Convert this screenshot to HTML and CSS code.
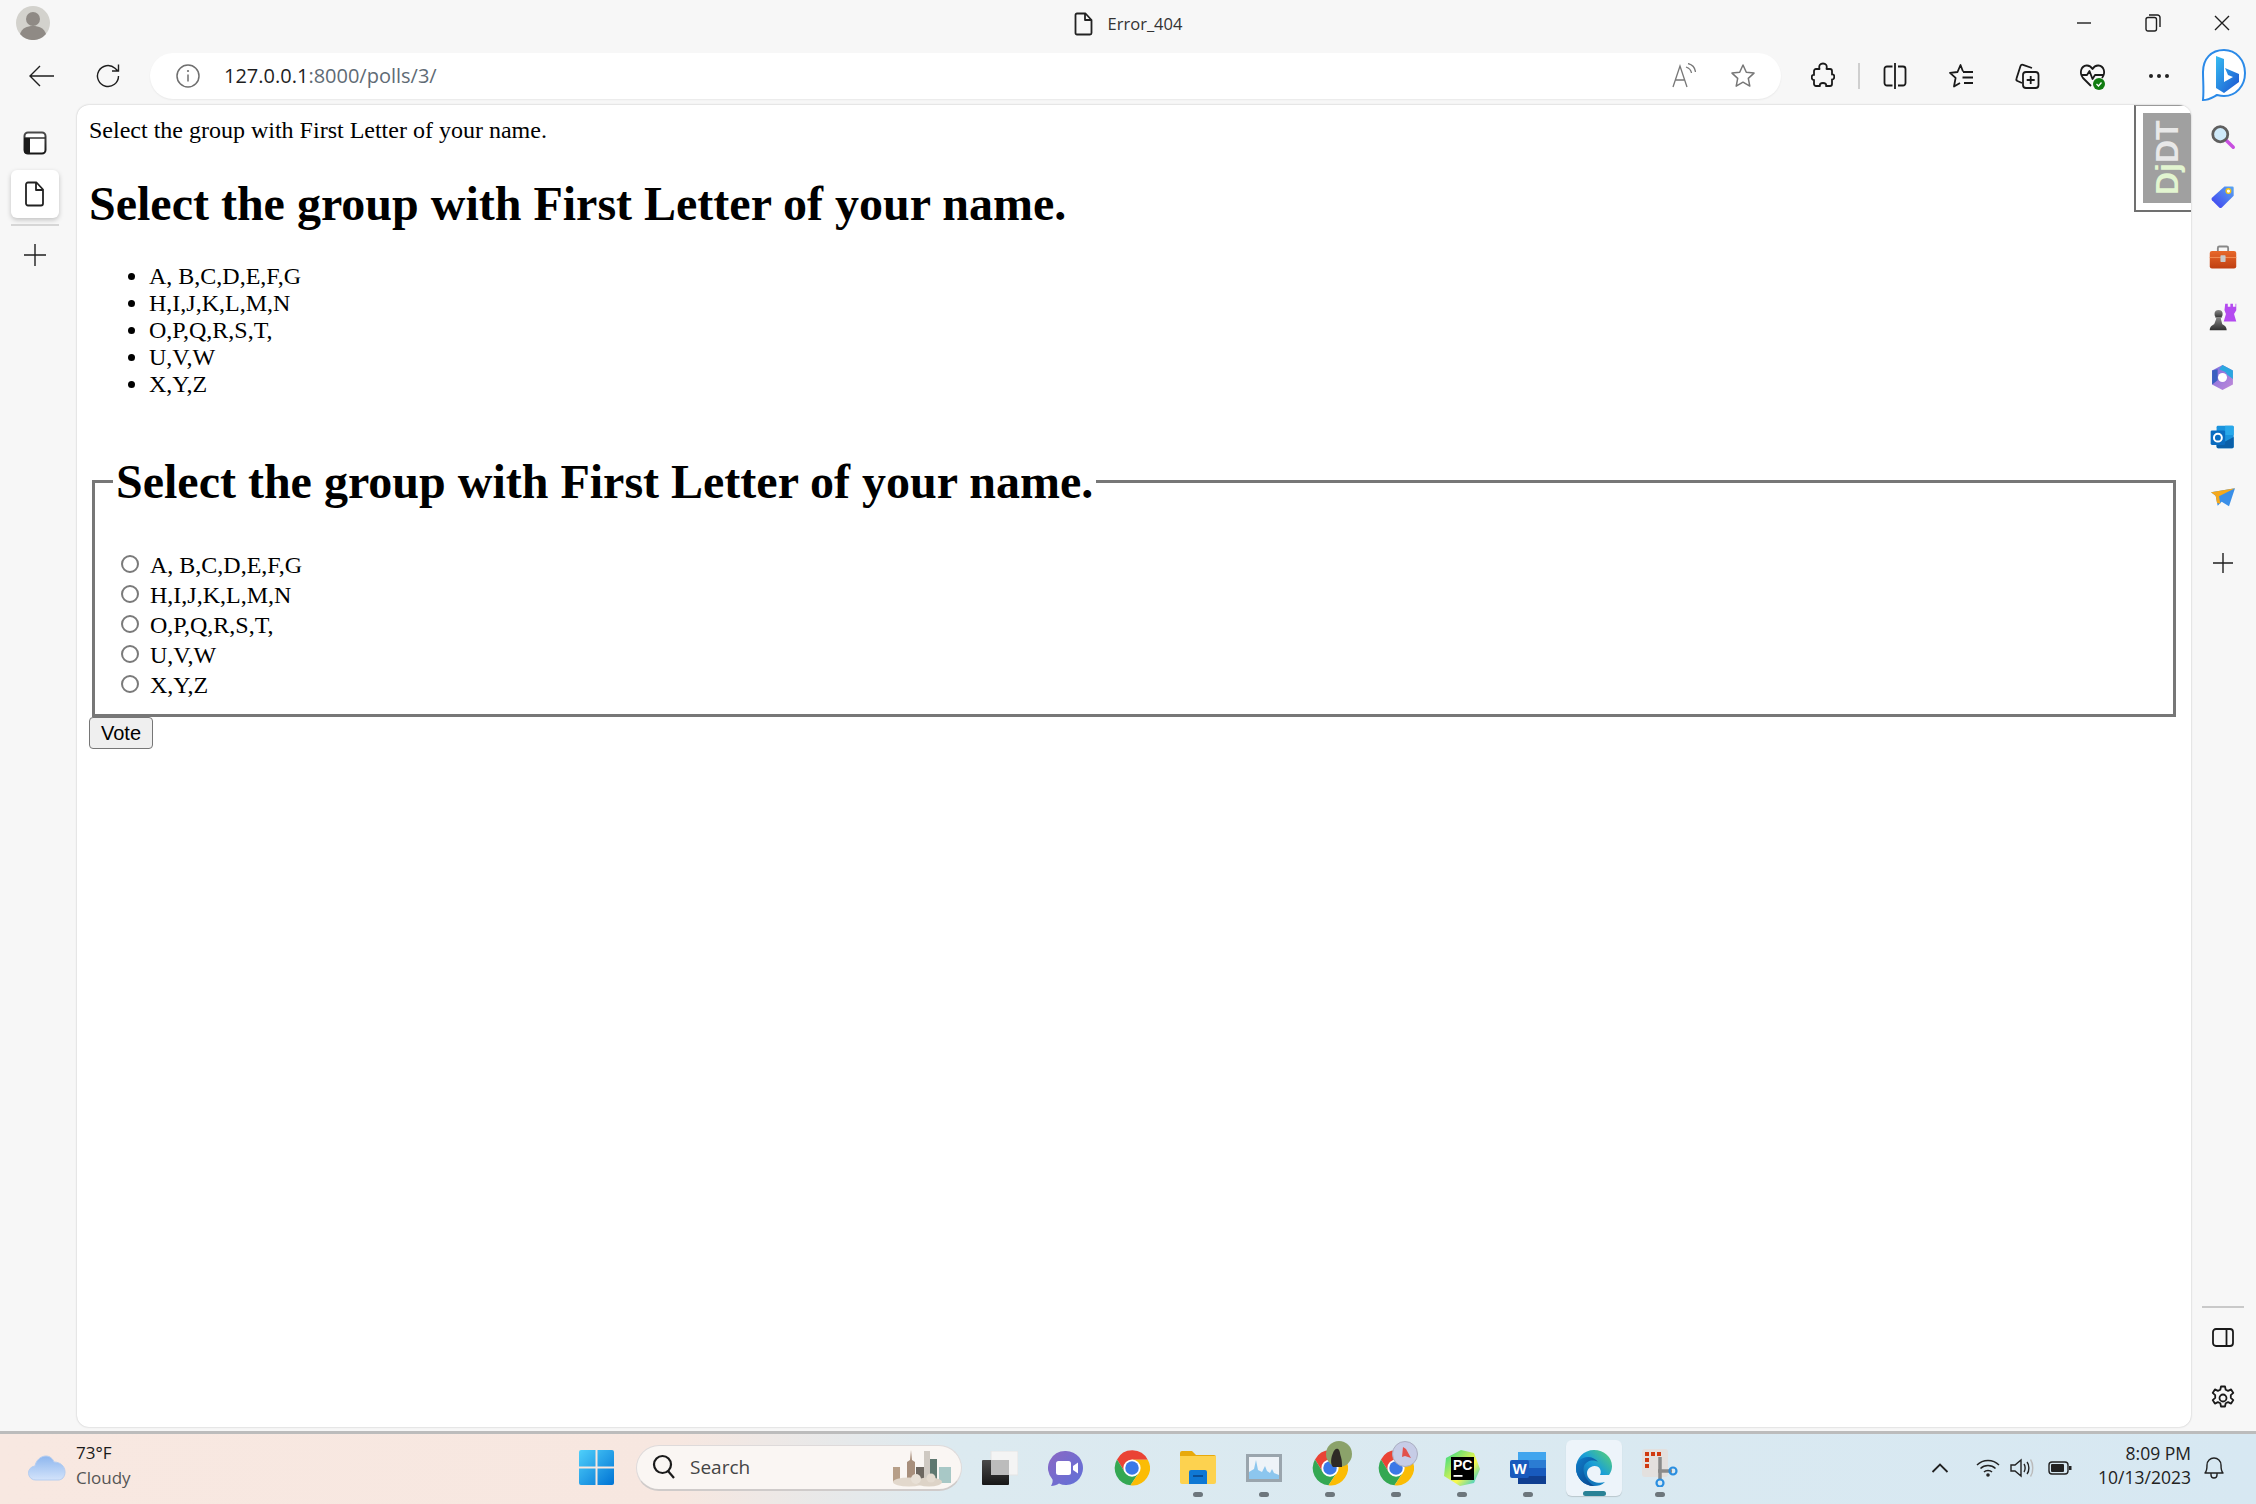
FILE: index.html
```html
<!DOCTYPE html>
<html lang="en">
<head>
<meta charset="utf-8">
<title>Error_404</title>
<link rel="stylesheet" href="styles.css">
</head>
<body>
<svg class="defs" width="0" height="0" aria-hidden="true">
  <defs>
    <linearGradient id="gWin" x1="0" y1="0" x2="1" y2="1"><stop offset="0" stop-color="#4fd0fb"/><stop offset="1" stop-color="#0073d4"/></linearGradient>
    <linearGradient id="gTeams" x1="0" y1="0" x2="1" y2="1"><stop offset="0" stop-color="#8b68c4"/><stop offset="1" stop-color="#5f70d8"/></linearGradient>
    <linearGradient id="gBing" x1="0" y1="0" x2="1" y2="1"><stop offset="0" stop-color="#37bdf2"/><stop offset="1" stop-color="#1a52d0"/></linearGradient>
    <linearGradient id="gEdge" x1="0" y1="1" x2="1" y2="0"><stop offset="0" stop-color="#0c4f9e"/><stop offset=".55" stop-color="#1a9fd8"/><stop offset="1" stop-color="#5fd66a"/></linearGradient>
    <linearGradient id="gEdge2" x1="0" y1="0" x2="1" y2="1"><stop offset="0" stop-color="#0f7fcb"/><stop offset="1" stop-color="#0a3f87"/></linearGradient>
    <linearGradient id="gCloud" x1="0" y1="0" x2="0" y2="1"><stop offset="0" stop-color="#8db6ee"/><stop offset="1" stop-color="#d3e3fa"/></linearGradient>
    <linearGradient id="gTag" x1="1" y1="0" x2="0" y2="1"><stop offset="0" stop-color="#5aa7f0"/><stop offset="1" stop-color="#3f3df0"/></linearGradient>
    <linearGradient id="gCase" x1="0" y1="0" x2="0" y2="1"><stop offset="0" stop-color="#e8682a"/><stop offset="1" stop-color="#bf3f12"/></linearGradient>
    <linearGradient id="gPawn" x1="0" y1="0" x2="0" y2="1"><stop offset="0" stop-color="#8a8a8a"/><stop offset="1" stop-color="#2f2f2f"/></linearGradient>
    <linearGradient id="gView" x1="0" y1="0" x2="0" y2="1"><stop offset="0" stop-color="#4a4a4a"/><stop offset="1" stop-color="#171717"/></linearGradient>
    <linearGradient id="gM365" x1="0" y1="0" x2="1" y2="1"><stop offset="0" stop-color="#7b6ee0"/><stop offset="1" stop-color="#c28ad8"/></linearGradient>
    <linearGradient id="gPc" x1="0" y1="0" x2="1" y2="1"><stop offset="0" stop-color="#21d789"/><stop offset=".6" stop-color="#fcf84a"/><stop offset="1" stop-color="#07c3f2"/></linearGradient>
    <symbol id="chrome" viewBox="0 0 48 48">
      <path fill="#ea4335" d="M24 13H45A23 23 0 0 0 4 12.500L14.500 29.500Z"/>
      <path fill="#34a853" d="M14.500 29.500 4 12.500A23 23 0 0 0 22 47L33.500 29.500Z"/>
      <path fill="#fbbc05" d="M24 13H45A23 23 0 0 1 22 47L33.500 29.500Z"/>
      <circle cx="24" cy="24" r="11.500" fill="#fff"/>
      <circle cx="24" cy="24" r="9" fill="#3b78e7"/>
    </symbol>
  </defs>
</svg>

<div class="window">
  <header class="titlebar">
    <div class="profile">
      <svg width="34" height="34" viewBox="0 0 34 34"><circle cx="17" cy="17" r="17" fill="#d3d2cd"/><circle cx="17" cy="13" r="7" fill="#8f8a85"/><path fill="#8f8a85" d="M4 28c2-6 7-8 13-8s11 2 13 8a17 17 0 0 1-26 0z"/></svg>
    </div>
    <div class="doc-title">
      <svg class="line" width="20" height="24" viewBox="0 0 20 24"><path d="M3 1.500h8.500l6 6.500v13a1.500 1.500 0 0 1-1.500 1.500H3A1.500 1.500 0 0 1 1.500 21V3A1.500 1.500 0 0 1 3 1.500zM11 1.500V8h6.500"/></svg>
      <span>Error_404</span>
    </div>
    <div class="win-controls">
      <span class="win-btn"><svg class="thin" width="16" height="16" viewBox="0 0 16 16"><path d="M1 8h14"/></svg></span>
      <span class="win-btn"><svg class="thin" width="16" height="18" viewBox="0 0 16 18"><rect x="1" y="3.500" width="10.500" height="13.500" rx="2"/><path d="M4 1h8.500A2.500 2.500 0 0 1 15 3.500V13"/></svg></span>
      <span class="win-btn"><svg class="thin" width="16" height="16" viewBox="0 0 16 16"><path d="M1 1l14 14M15 1L1 15"/></svg></span>
    </div>
  </header>

  <nav class="toolbar">
    <span class="slot"><svg class="thin" width="28" height="24" viewBox="0 0 28 24"><path d="M26 12H2M12 2 2 12l10 10"/></svg></span>
    <span class="slot"><svg class="thin" width="28" height="28" viewBox="0 0 28 28"><path d="M24.500 14A10.500 10.500 0 1 1 21 6.200L24 9M24.500 2.500V9h-6.500"/></svg></span>
    <div class="address">
      <span class="addr-icon"><svg width="24" height="24" viewBox="0 0 24 24"><circle cx="12" cy="12" r="11" fill="none" stroke="#6f6f6f" stroke-width="1.500"/><path d="M12 10.500v7" stroke="#6f6f6f" stroke-width="1.500"/><circle cx="12" cy="7" r="1.100" fill="#6f6f6f"/></svg></span>
      <span class="url"><span class="host">127.0.0.1</span>:8000/polls/3/</span>
      <span class="addr-icon"><svg width="24" height="26" viewBox="0 0 24 26"><path d="M1 24 8 3l7 21M3.500 17h9M14 4c3 1 5 3 5.500 6M16 .5c4 1 7 4 7.500 8.500" fill="none" stroke="#777" stroke-width="1.300"/></svg></span>
      <span class="addr-gap"></span>
      <span class="addr-icon"><svg width="26" height="26" viewBox="0 0 26 26"><path d="M13 2l3.300 7.200 7.700.9-5.700 5.300 1.500 7.700L13 19.200 6.200 23.100l1.500-7.700L2 10.100l7.700-.9z" fill="none" stroke="#777" stroke-width="1.500" stroke-linejoin="round"/></svg></span>
    </div>
    <span class="slot"><svg class="thick" width="24" height="28" viewBox="0 0 24 28"><path d="M8.500 7c-1-4 1-5.500 3.500-5.500S16.500 3 15.500 7H19a2 2 0 0 1 2 2v3.500c3-1 3 5.500 0 5V22a2 2 0 0 1-2 2h-4c.7-2-.8-3-3-3s-3.700 1-3 3H5a2 2 0 0 1-2-2v-4c-3 .5-3-6 0-5V9a2 2 0 0 1 2-2z"/></svg></span>
    <span class="tool-divider"></span>
    <span class="slot"><svg class="thick" width="24" height="28" viewBox="0 0 24 28"><path d="M12 1v26M9.500 4.500H4A2.500 2.500 0 0 0 1.500 7v14A2.500 2.500 0 0 0 4 23.500h5.500M15 4.500h5A2.500 2.500 0 0 1 22.500 7v14a2.500 2.500 0 0 1-2.500 2.500h-5"/></svg></span>
    <span class="slot"><svg class="thick" width="26" height="26" viewBox="0 0 26 26"><path d="M15 8.500 12.500 2 9.500 9 2 9.800l5.600 5-1.600 8.700 6-3.500M15 9h10M14.500 14.500H25M16 20h9"/></svg></span>
    <span class="slot"><svg class="thick" width="26" height="28" viewBox="0 0 26 28"><path d="M8 21 3.500 19a2 2 0 0 1-1-2.500L6.500 4a2 2 0 0 1 2.500-1.200L18 6"/><rect x="9" y="10" width="15.500" height="16" rx="3"/><path d="M16.700 14v8M12.700 18h8"/></svg></span>
    <span class="slot"><svg width="28" height="28" viewBox="0 0 28 28"><path class="stroke-dark" d="M12 24 4 16C0 11 2 4 7.500 3.500c2.500-.2 4.500 1 6 3.500 1.500-2.500 3.500-3.700 6-3.500C25 4 27 11 23 16M2 13h6l2.500-4 3 8 2.500-4h8"/><circle cx="20" cy="22" r="6" fill="#107c10"/><path d="M17.500 22l2 2 3-3.500" fill="none" stroke="#fff" stroke-width="1.300"/></svg></span>
    <span class="slot"><svg width="22" height="6" viewBox="0 0 22 6"><circle cx="3" cy="3" r="2" fill="#222"/><circle cx="11" cy="3" r="2" fill="#222"/><circle cx="19" cy="3" r="2" fill="#222"/></svg></span>
    <span class="bing-slot"><svg width="46" height="56" viewBox="0 0 46 56"><path d="M23 2C10 2 2 11 2 24c0 9 1 18 0 28 6 0 10-3 14-5 3 .7 5 1 7 1 12 0 21-10 21-23S35 2 23 2z" fill="#fff" stroke="#2b8ae8" stroke-width="2"/><path fill="url(#gBing)" d="M15 8l8 3v23l9-5-5-2-3-7 14 6v8L23 45l-8-5z"/></svg></span>
  </nav>

  <div class="main">
    <aside class="left-rail">
      <span class="rail-item view-toggle"><svg width="24" height="24" viewBox="0 0 24 24"><rect x="1.500" y="1.500" width="21" height="21" rx="3.500" fill="#fff" stroke="url(#gView)" stroke-width="2"/><path d="M1 7h22" stroke="#333" stroke-width="1.500"/><path fill="#1a1a1a" d="M1 7h6v16H4a3 3 0 0 1-3-3z"/></svg></span>
      <span class="rail-item tab-active"><svg class="line" width="20" height="26" viewBox="0 0 20 26"><path d="M3 1.500h8.500l6.500 7v14a2 2 0 0 1-2 2H3a2 2 0 0 1-2-2V3.500A2 2 0 0 1 3 1.500zM11 1.500V9h7"/></svg></span>
      <span class="rail-divider"></span>
      <span class="rail-item rail-plus"><svg class="thin" width="22" height="22" viewBox="0 0 22 22"><path d="M11 0v22M0 11h22"/></svg></span>
    </aside>

    <main class="page">
      <p class="intro">Select the group with First Letter of your name.</p>
      <h1 class="heading">Select the group with First Letter of your name.</h1>
      <ul class="groups">
        <li>A, B,C,D,E,F,G</li>
        <li>H,I,J,K,L,M,N</li>
        <li>O,P,Q,R,S,T,</li>
        <li>U,V,W</li>
        <li>X,Y,Z</li>
      </ul>
      <form class="vote-form">
        <fieldset class="field">
          <legend class="legend"><h1 class="heading heading-legend">Select the group with First Letter of your name.</h1></legend>
          <label class="choice"><span class="radio"></span>A, B,C,D,E,F,G</label>
          <label class="choice"><span class="radio"></span>H,I,J,K,L,M,N</label>
          <label class="choice"><span class="radio"></span>O,P,Q,R,S,T,</label>
          <label class="choice"><span class="radio"></span>U,V,W</label>
          <label class="choice"><span class="radio"></span>X,Y,Z</label>
        </fieldset>
        <button type="button" class="vote">Vote</button>
      </form>
      <div class="djdt"><span class="djdt-text"><span class="dj">Dj</span>DT</span></div>
    </main>

    <aside class="right-rail">
      <span class="side-slot"><svg width="26" height="26" viewBox="0 0 38 38"><path d="M24 24l10 10" stroke="#c84fe0" stroke-width="5" stroke-linecap="round"/><circle cx="15" cy="15" r="11" fill="#cfeafa" stroke="#5f5f5f" stroke-width="4"/></svg></span>
      <span class="side-slot"><svg width="25" height="24" viewBox="0 0 38 36"><path fill="url(#gTag)" d="M22 2h12a2 2 0 0 1 2 2v12L18 34a3 3 0 0 1-4 0L3 23a3 3 0 0 1 0-4z"/><circle cx="28" cy="9" r="3.500" fill="#fff" stroke="#f5c518" stroke-width="2"/></svg></span>
      <span class="side-slot"><svg width="28" height="25" viewBox="0 0 38 34"><path d="M12 9V4a2 2 0 0 1 2-2h10a2 2 0 0 1 2 2v5" fill="none" stroke="#888" stroke-width="2.500"/><rect x="1" y="8" width="36" height="24" rx="3" fill="url(#gCase)"/><path d="M1 17h36" stroke="#f08a50" stroke-width="1.500"/><rect x="15.500" y="14" width="7" height="9" rx="1" fill="#c8c8c8"/></svg></span>
      <span class="side-slot"><svg width="28" height="28" viewBox="0 0 38 38"><path fill="#b44af0" d="M22 1h3.500v4H29V1h3.500v4H36V1h1v9l-3 5 3 10H20l3-10-2-5z"/><circle cx="13" cy="15" r="5.500" fill="url(#gPawn)"/><path fill="url(#gPawn)" d="M8 19h10l-2 2 2 8c2 1 6 3 6 8H1c0-5 4-7 6-8l3-8z"/></svg></span>
      <span class="side-slot"><svg width="25" height="27" viewBox="0 0 36 38"><path fill="url(#gM365)" d="M18 1 33 9v20L18 37 3 29V9z"/><path fill="#2ba7e0" d="M18 1l15 8v12l-8-6-3-4-9-4z"/><path fill="#3a5fc0" d="M3 9l8-2v16l-8 6z"/><circle cx="18" cy="19" r="6.500" fill="#fff"/></svg></span>
      <span class="side-slot"><svg width="25" height="24" viewBox="0 0 38 36"><rect x="10" y="1" width="26" height="34" rx="2" fill="#1a93dd"/><path fill="#28a8ea" d="M23 1h11a2 2 0 0 1 2 2v12H23z"/><path fill="#0a5fa8" d="M10 18l13 7 13-7v15a2 2 0 0 1-2 2H12a2 2 0 0 1-2-2z"/><rect x="1" y="8" width="22" height="22" rx="2" fill="#0a6cc0"/><circle cx="12" cy="19" r="6" fill="none" stroke="#fff" stroke-width="3"/></svg></span>
      <span class="side-slot"><svg width="26" height="20" viewBox="0 0 38 30"><path fill="#3a8fe8" d="M1 8 37 2 28 29 17 22 11 28 8 13z"/><path fill="#f5a81c" d="M1 8 37 2 13 14l2 11-5-1-2-11z"/></svg></span>
      <span class="side-slot side-plus"><svg class="thin" width="20" height="20" viewBox="0 0 20 20"><path d="M10 0v20M0 10h20"/></svg></span>
      <span class="side-divider"></span>
      <span class="side-slot"><svg class="thick" width="22" height="20" viewBox="0 0 22 20"><rect x="1" y="1" width="20" height="17" rx="3"/><path d="M14.500 1v17"/></svg></span>
      <span class="side-slot side-last"><svg class="thick" width="26" height="26" viewBox="0 0 26 26"><circle cx="13" cy="13" r="3.500"/><path d="M11 1.500h4l.7 3.300 2.400 1.100 3-1.500 2.200 3.500-2.500 2.200v2.800l2.500 2.200-2.200 3.500-3-1.500-2.400 1.100-.7 3.300h-4l-.7-3.300-2.400-1.100-3 1.500-2.200-3.500 2.500-2.200v-2.800L2.700 7.900l2.200-3.500 3 1.500 2.400-1.100z"/></svg></span>
    </aside>
  </div>

  <footer class="taskbar">
    <div class="weather">
      <svg width="38" height="26" viewBox="0 0 38 26"><path fill="url(#gCloud)" stroke="#b5cdf0" d="M8 25a7 7 0 0 1-1-14c1-6 6-10 11-10 4 0 7 3 8 6 6 0 11 4 11 10 0 5-3 8-7 8z"/></svg>
      <div class="weather-text"><span>73°F</span><span class="weather-sub">Cloudy</span></div>
    </div>
    <span class="start"><svg width="35" height="35" viewBox="0 0 35 35"><path fill="url(#gWin)" d="M0 2a2 2 0 0 1 2-2h14.500v16.500H0zM18.500 0H33a2 2 0 0 1 2 2v14.500H18.500zM0 18.500h16.500V35H2a2 2 0 0 1-2-2zM18.500 18.500H35V33a2 2 0 0 1-2 2H18.500z"/></svg></span>
    <div class="search">
      <svg width="24" height="26" viewBox="0 0 24 26"><circle cx="10.500" cy="10.500" r="8.500" fill="none" stroke="#1a1a1a" stroke-width="2.200"/><path d="M16 17l6 7" stroke="#1a1a1a" stroke-width="2.200"/></svg>
      <span class="search-label">Search</span>
      <svg class="skyline" width="66" height="40" viewBox="0 0 66 40"><path fill="#a88f7c" d="M18 34V15l3-2 1-10 1 10 3 2v19z"/><rect x="4" y="20" width="7" height="15" fill="#b79f88"/><rect x="27" y="20" width="8" height="14" fill="#6d6760"/><rect x="35" y="4" width="6" height="30" fill="#cfc9c2"/><rect x="41" y="12" width="7" height="22" fill="#5f7870"/><rect x="50" y="20" width="12" height="16" fill="#a8c8c6"/><ellipse cx="20" cy="35" rx="16" ry="4.500" fill="#e2d8cc"/><ellipse cx="40" cy="35" rx="13" ry="4.500" fill="#ddd3c7"/><circle cx="27" cy="32" r="5" fill="#e8e0d6"/><circle cx="42" cy="31" r="4.500" fill="#e4dbd0"/></svg>
    </div>
    <div class="apps">
      <span class="app"><svg width="36" height="34" viewBox="0 0 36 34"><rect x="9" y="0" width="27" height="24" fill="#f4f4f4" stroke="#e4e4e4"/><rect x="0" y="9" width="27" height="25" rx="1" fill="url(#gView)"/><rect x="9" y="9" width="18" height="15" fill="#bcbcbc"/></svg></span>
      <span class="app"><svg width="36" height="36" viewBox="0 0 36 36"><path fill="url(#gTeams)" d="M18 1a17 17 0 1 1-7 32.500c-2 1.500-5 2.500-8 2.500 1-2 2-4 1.500-6.500A17 17 0 0 1 18 1z"/><rect x="8" y="11" width="15" height="14" rx="2.500" fill="#fff"/><path fill="#fff" d="M25 16l5-3.500v11L25 20z"/></svg></span>
      <span class="app"><svg width="36" height="36"><use href="#chrome"/></svg></span>
      <span class="app app-open"><svg width="36" height="33" viewBox="0 0 36 33"><path fill="#e8a90c" d="M0 2a2 2 0 0 1 2-2h10l4 4h18a2 2 0 0 1 2 2v6H0z"/><path fill="#fdd24f" d="M0 5h36v26a2 2 0 0 1-2 2H2a2 2 0 0 1-2-2z"/><path fill="#0f78d4" d="M9 21a2 2 0 0 1 2-2h14a2 2 0 0 1 2 2v12H9z"/><rect x="13" y="24" width="10" height="2" fill="#0a4f96"/></svg></span>
      <span class="app app-open"><svg width="36" height="28" viewBox="0 0 36 28"><rect x="1.500" y="1.500" width="33" height="25" fill="#eef3f8" stroke="#9aa5ad" stroke-width="3"/><path fill="#8cc6ee" d="M3 25V18l5-3 2-9 2 10 4 2 3-6 2 5 3 2 2-4 2 4 5 2v4z"/></svg></span>
      <span class="app app-open"><svg width="36" height="36"><use href="#chrome"/></svg><svg class="app-badge" width="26" height="26" viewBox="0 0 26 26"><circle cx="13" cy="13" r="13" fill="#8ba26a"/><path fill="#2e2a26" d="M7 26c-3-3-2-10 0-14 1-3 3-5 5-4s2 5 3 8 1 7 1 10z"/></svg></span>
      <span class="app app-open"><svg width="36" height="36"><use href="#chrome"/></svg><svg class="app-badge" width="26" height="26" viewBox="0 0 26 26"><circle cx="13" cy="13" r="12.500" fill="#c6cce6" stroke="#aaaec0"/><path fill="#e2504a" d="M11 6l3 2 5 9-6-2-3 1z"/></svg></span>
      <span class="app app-open"><svg width="36" height="36" viewBox="0 0 36 36"><path fill="url(#gPc)" d="M2 8 17 0l13 3 6 16-6 14-14 3L0 26z"/><rect x="7" y="7" width="23" height="23" fill="#000"/><text class="pc-text" x="9" y="20">PC</text><rect x="9.500" y="25" width="9" height="1.800" fill="#fff"/></svg></span>
      <span class="app app-open"><svg width="36" height="36" viewBox="0 0 36 36"><rect x="8" y="2" width="28" height="32" rx="2" fill="#2b7cd3"/><rect x="8" y="2" width="28" height="8" fill="#41a5ee"/><rect x="8" y="18" width="28" height="8" fill="#185abd"/><rect x="8" y="26" width="28" height="8" fill="#103f91"/><rect x="0" y="10" width="19" height="18" rx="2" fill="#185abd"/><text class="word-text" x="9.500" y="24" text-anchor="middle">W</text></svg></span>
      <span class="app app-open app-current"><svg width="36" height="36" viewBox="0 0 36 36"><path fill="url(#gEdge)" d="M18 0C8 0 0 8 0 18c0 10 8 18 18 18 4 0 8-1 11-4-6 2-14 0-17-5-2-4-1-8 3-10 3-2 8-1 9 2 1 2 1 4 0 6h9c3-4 3-8 3-9C36 7 28 0 18 0z"/><path fill="url(#gEdge2)" d="M0 18c0-6 5-11 12-11 4 0 8 2 10 5-5-3-12-1-14 4-2 6 2 15 10 20C8 36 0 28 0 18z"/></svg></span>
      <span class="app app-open"><svg width="36" height="38" viewBox="0 0 36 38"><rect x="0" y="0" width="26" height="28" rx="3" fill="#e3e0de"/><path d="M3 3h4v4H3zM9 3h4v4H9zM15 3h4v4h-4zM3 9h4v4H3zM3 15h4v4H3z" fill="#d03a10"/><path d="M18 8v22M16 22h14" stroke="#8a8a8a" stroke-width="3.500" fill="none"/><circle cx="31" cy="22" r="3.500" fill="none" stroke="#2a8ee0" stroke-width="2.200"/><circle cx="18" cy="34" r="3.500" fill="none" stroke="#2a8ee0" stroke-width="2.200"/></svg></span>
    </div>
    <div class="tray">
      <svg class="tray-chevron" width="18" height="10" viewBox="0 0 18 10"><path d="M1.500 9 9 1.500 16.500 9" fill="none" stroke="#222" stroke-width="1.800"/></svg>
      <svg class="tray-wifi" width="24" height="20" viewBox="0 0 24 20"><g fill="none" stroke="#222" stroke-width="1.500"><path d="M1 7c6-6 16-6 22 0M4.500 10.500c4-4 11-4 15 0M8 14c2-2 6-2 8 0"/></g><circle cx="12" cy="17" r="1.800" fill="#222"/></svg>
      <svg class="tray-sound" width="24" height="20" viewBox="0 0 24 20"><path d="M1 7h4l6-5v16l-6-5H1zM14 6c1.500 2 1.500 6 0 8M17 4c2.500 3 2.500 9 0 12" fill="none" stroke="#222" stroke-width="1.400"/><path d="M20.500 1.500c3 4 3 13 0 17" fill="none" stroke="#bbb" stroke-width="1.400"/></svg>
      <svg class="tray-battery" width="24" height="14" viewBox="0 0 24 14"><rect x="1" y="1" width="19" height="12" rx="3" fill="none" stroke="#222" stroke-width="1.400"/><rect x="3" y="3" width="13" height="8" rx="1" fill="#222"/><rect x="21" y="5" width="2.500" height="4" fill="#222"/></svg>
      <div class="clock"><span>8:09 PM</span><span>10/13/2023</span></div>
      <svg class="tray-bell" width="20" height="22" viewBox="0 0 20 22"><path d="M1 16c2-2 2-4 2-8a7 7 0 0 1 14 0c0 4 0 6 2 8zM7 16v2a3 3 0 0 0 6 0v-2" fill="none" stroke="#222" stroke-width="1.400" stroke-linejoin="round"/></svg>
    </div>
  </footer>
</div>
</body>
</html>
```
FILE: styles.css
```css
* { box-sizing: border-box; }
html, body { margin: 0; padding: 0; }
body { width: 2256px; height: 1504px; overflow: hidden; background: #f7f7f7; font-family: "Open Sans", "Noto Sans", sans-serif; color: #1a1a1a; }
.defs { position: absolute; }
svg { display: block; flex: none; }
.thin path, .thin rect { fill: none; stroke: #1f1f1f; stroke-width: 1.400; }
.thick path, .thick rect, .thick circle { fill: none; stroke: #1a1a1a; stroke-width: 1.800; stroke-linejoin: round; }
.line path { fill: none; stroke: #222; stroke-width: 1.800; stroke-linejoin: round; }
.stroke-dark { fill: none; stroke: #1a1a1a; stroke-width: 1.800; stroke-linejoin: round; }

.window { width: 2256px; height: 1504px; display: grid; grid-template-rows: 46px 59px 1fr 73px; }

.titlebar { display: grid; grid-template-columns: 1fr auto 1fr; align-items: center; }
.profile { justify-self: start; margin-left: 16px; }
.doc-title { display: flex; align-items: center; gap: 14px; padding-top: 1px; font-size: 16.500px; color: #333; }
.win-controls { justify-self: end; display: flex; }
.win-btn { width: 69px; height: 46px; display: flex; align-items: center; justify-content: center; }

.toolbar { display: flex; align-items: center; padding-left: 9px; }
.slot { width: 66px; height: 46px; display: flex; align-items: center; justify-content: center; flex: none; }
.address { width: 1631px; height: 46px; margin: 0 9px; border-radius: 23px; background: #fff; box-shadow: 0 1px 2px rgba(0,0,0,.06); display: flex; align-items: center; padding: 0 22px; flex: none; }
.addr-icon { width: 32px; display: flex; justify-content: center; flex: none; }
.addr-gap { width: 27px; flex: none; }
.url { flex: 1; margin-left: 20px; font-size: 20px; color: #5f6b75; }
.host { color: #1f1f1f; }
.tool-divider { width: 2px; height: 26px; margin: 0 2px; background: #cfcfcf; flex: none; }
.bing-slot { width: 64px; display: flex; justify-content: center; flex: none; }

.main { display: grid; grid-template-columns: 77px 1fr 65px; min-height: 0; }
.left-rail { display: flex; flex-direction: column; align-items: flex-start; padding: 26px 0 0 11px; }
.rail-item { width: 48px; display: flex; justify-content: center; align-items: center; }
.view-toggle { height: 24px; }
.tab-active { height: 48px; margin-top: 15px; background: #fff; border-radius: 6px; box-shadow: 0 2px 5px rgba(0,0,0,.22); }
.rail-divider { width: 48px; height: 2px; margin-top: 6px; background: #d6d6d6; }
.rail-plus { margin-top: 18px; }

.page { position: relative; overflow: hidden; margin-bottom: 4px; background: #fff; border-radius: 12px; box-shadow: 0 0 2px rgba(0,0,0,.25); padding: 12px 12px 0; font-family: "Liberation Serif", "Times New Roman", serif; color: #000; font-size: 24px; line-height: 27px; }
.intro { margin: 0; }
.heading { margin: 32px 0 0; font-size: 48px; line-height: 55px; font-weight: 700; }
.heading-legend { margin: 0; }
.groups { margin: 32px 0 0; padding: 0 0 0 60px; list-style: disc; }
.vote-form { margin-top: 56px; }
.field { margin: 0 3px; padding: 41px 18px 14px; border: 3px solid #777; min-width: 0; }
.legend { padding: 0 3px; }
.choice { display: flex; align-items: center; height: 30px; }
.radio { width: 18px; height: 18px; margin: -2px 11.500px 0 7.500px; border: 2px solid #7a7a7a; border-radius: 50%; background: #fff; flex: none; }
.vote { display: block; width: 64px; height: 32px; padding: 0; border: 1.500px solid #767676; border-radius: 4px; background: #efefef; color: #000; font-family: "Liberation Sans", Arial, sans-serif; font-size: 20px; }
.djdt { position: absolute; top: 0; right: 0; width: 57px; height: 107px; padding: 7px 0 7px 7px; background: #fff; border: 2px solid #707070; border-right: 0; border-top: 1px solid #999; }
.djdt-text { display: flex; align-items: center; justify-content: center; width: 100%; height: 100%; background: #a0a0a0; writing-mode: vertical-rl; transform: rotate(180deg); font-family: "Liberation Sans", Arial, sans-serif; font-weight: 700; font-size: 32px; line-height: 1; color: #e8e8e8; }
.dj { color: #e2f5d0; }

.right-rail { display: flex; flex-direction: column; align-items: center; padding: 2px 2px 3px 0; }
.side-slot { width: 63px; height: 60px; display: flex; align-items: center; justify-content: center; flex: none; }
.side-plus { margin-top: 6px; }
.side-divider { width: 42px; height: 2px; margin-top: auto; background: #c9c9c9; flex: none; }

.taskbar { display: flex; align-items: center; padding-bottom: 3px; border-top: 3px solid #bcbcbc; background: linear-gradient(90deg, #f8e8e1 0%, #f7e7e0 30%, #dceaf0 42%, #d7e8f2 100%); }
.weather { width: 579px; display: flex; align-items: center; padding-left: 28px; flex: none; gap: 10px; }
.weather-text { display: flex; flex-direction: column; padding-bottom: 5px; font-size: 17px; line-height: 25px; }
.weather-sub { color: #555; }
.start { flex: none; }
.search { width: 326px; height: 46px; margin-left: 22px; display: flex; align-items: center; padding: 0 6px 0 15px; border-radius: 23px; background: #faf6f3; border: 1px solid #dedada; border-bottom: 2px solid #cfcbca; flex: none; }
.search-label { flex: 1; margin-left: 14px; font-size: 19px; color: #444; }
.apps { display: flex; margin-left: 5px; flex: none; }
.app { position: relative; width: 66px; height: 66px; display: flex; align-items: center; justify-content: center; flex: none; }
.app-open::after { content: ""; position: absolute; left: 28px; bottom: 4px; width: 10px; height: 5px; border-radius: 3px; background: #6d767c; }
.app-current { width: 56px; height: 56px; margin: 5px 5px 0; border-radius: 6px; background: #edf4fa; box-shadow: 0 1px 1px rgba(0,0,0,.15); }
.app-current::after { left: 17px; bottom: 0; width: 23px; height: 5px; background: #2a8296; }
.app-badge { position: absolute; left: 29px; top: 6px; }
.pc-text { font: 700 14px "Liberation Sans", sans-serif; fill: #fff; }
.word-text { font: 700 15px "Liberation Sans", sans-serif; fill: #fff; }
.tray { margin-left: auto; display: flex; align-items: center; padding-right: 32px; flex: none; }
.tray-wifi { margin-left: 27px; }
.tray-sound { margin-left: 10px; }
.tray-battery { margin-left: 14px; }
.clock { display: flex; flex-direction: column; align-items: flex-end; margin-left: 26px; padding-bottom: 5px; font-size: 17.500px; line-height: 24px; color: #222; }
.tray-bell { margin-left: 13px; }
```
